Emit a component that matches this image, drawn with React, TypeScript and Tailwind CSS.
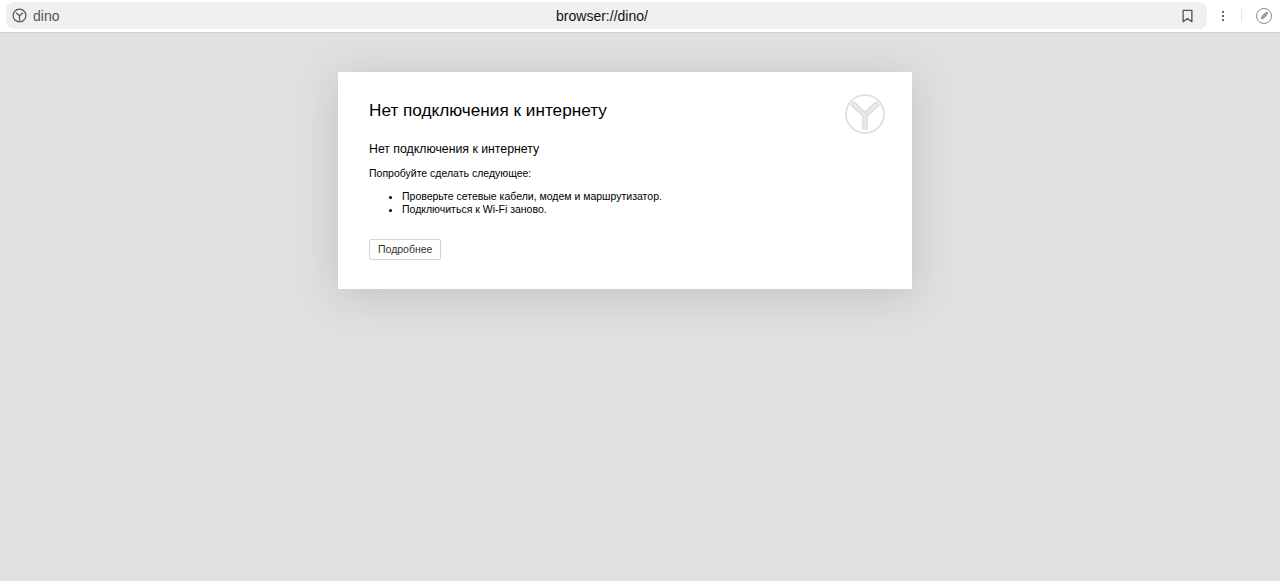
const YandexMark = ({ className }: { className?: string }) => (
  <svg viewBox="0 0 40 40" fill="none" className={className}>
    <circle cx="20" cy="20" r="19" stroke="currentColor" strokeWidth="1.6" />
    <path d="M7 9L20 21L33 9M20 21V36" stroke="#d6d6d6" strokeWidth="5.5" />
    <path d="M7 9L20 21L33 9M20 21V36" stroke="#e8e8e8" strokeWidth="3.5" />
  </svg>
);

export default function App() {
  return (
    <div className="flex h-[581px] flex-col overflow-hidden bg-[#e0e0e0] font-['Liberation_Sans',Arial,sans-serif]">
      {/* Browser top bar */}
      <header className="flex h-[33px] shrink-0 items-center border-b border-[#cfcfcf] bg-white pb-[1px] pl-[6px] pr-[8px]">
        <div className="relative flex h-[27px] flex-1 items-center rounded-lg bg-[#f0f0f0] pl-[6px] pr-[13px]">
          <svg viewBox="0 0 16 16" fill="none" className="h-[15px] w-[15px] text-[#555]">
            <circle cx="8" cy="8" r="6.8" stroke="currentColor" strokeWidth="1.3" />
            <path d="M4.2 5L8 8.2L11.8 5M8 8.2V13.5" stroke="currentColor" strokeWidth="1.3" />
          </svg>
          <span className="ml-[6px] text-sm text-[#555]">dino</span>
          <span className="absolute inset-x-0 pr-[9px] text-center text-sm text-[#111]">browser://dino/</span>
          <svg viewBox="0 0 14 16" fill="none" className="ml-auto h-[14px] w-[13px] text-[#555]">
            <path d="M2 1.5H12V14.5L7 11L2 14.5V1.5Z" stroke="currentColor" strokeWidth="1.5" strokeLinejoin="round" />
          </svg>
        </div>
        <div className="ml-[15px] flex flex-col gap-[2px]">
          <span className="h-[2px] w-[2px] rounded-full bg-[#333]" />
          <span className="h-[2px] w-[2px] rounded-full bg-[#333]" />
          <span className="h-[2px] w-[2px] rounded-full bg-[#333]" />
        </div>
        <div className="ml-[17px] h-[13px] w-px bg-[#e6e6e6]" />
        <div className="ml-[14px] flex h-4 w-4 items-center justify-center rounded-full border border-[#8a8a8a]">
          <span className="h-[3px] w-[9px] -rotate-45 rounded-full bg-[#999]" />
        </div>
      </header>

      {/* Error page */}
      <main className="flex flex-1 justify-center pt-[39px] pr-[30px]">
        <div className="relative h-[217px] w-[574px] bg-white pl-[31px] pt-[28px] text-black shadow-[0_6px_40px_rgba(0,0,0,0.14)]">
          <YandexMark className="absolute right-[27px] top-[22px] h-10 w-10 text-[#dcdcdc]" />
          <h1 className="text-[17.2px] leading-5">Нет подключения к интернету</h1>
          <p className="mt-[22px] text-[12.3px] leading-[15px]">Нет подключения к интернету</p>
          <p className="mt-[10px] text-[10.5px] leading-3">Попробуйте сделать следующее:</p>
          <ul className="mt-[11px] list-disc pl-[33px] text-[10.5px] leading-[13px]">
            <li>Проверьте сетевые кабели, модем и маршрутизатор.</li>
            <li>Подключиться к Wi-Fi заново.</li>
          </ul>
          <button className="mt-[23px] h-[21px] rounded-[2px] border border-[#d4d4d4] bg-white px-2 text-[10.5px] text-[#333]">
            Подробнее
          </button>
        </div>
      </main>
    </div>
  );
}
